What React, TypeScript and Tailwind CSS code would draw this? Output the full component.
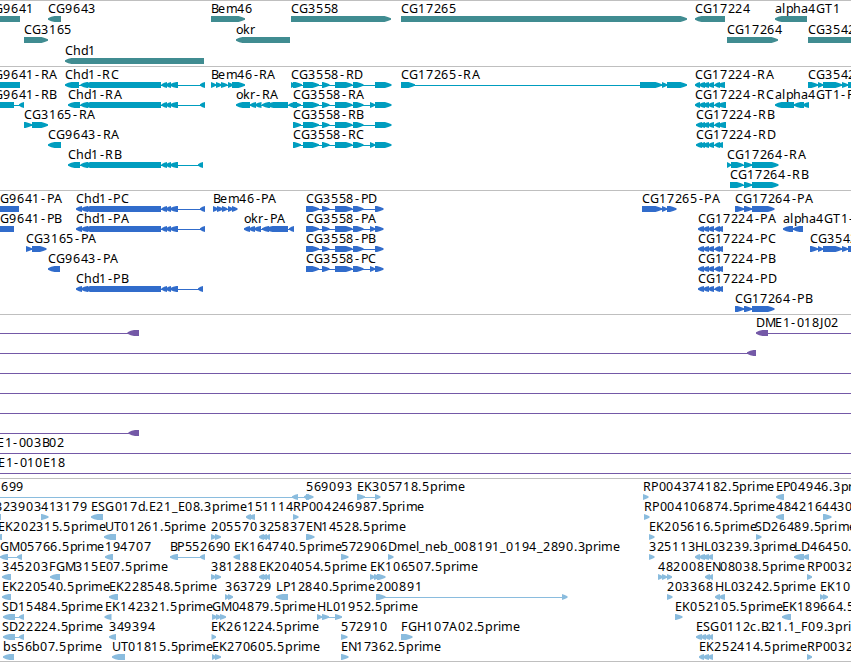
type Span = [number, number];
type Dir = 'l' | 'r' | '';

interface Feature {
  label: string;
  x: number;
  dir: Dir;
  spans: Span[];
}

interface Track {
  name: string;
  color: string;
  className: string;
  rowHeight: number;
  rows: Feature[][];
}

const WIDTH = 851;
const EM = 12;

// advance widths in em, used to place each glyph on a whole pixel
const ADVANCE: Record<string, number> = {
  A: 0.74, B: 0.62, C: 0.68, D: 0.76, E: 0.6, F: 0.575, G: 0.765, H: 0.75, J: 0.3, K: 0.656,
  L: 0.557, M: 0.863, P: 0.603, R: 0.69, S: 0.6, T: 0.611, U: 0.732,
  a: 0.613, b: 0.635, c: 0.55, d: 0.635, e: 0.6, g: 0.635, h: 0.634, i: 0.29, k: 0.579, l: 0.278,
  m: 0.974, n: 0.634, o: 0.612, p: 0.635, r: 0.42, s: 0.521,
  '-': 0.53, '.': 0.318, _: 0.5,
};
const DIGIT_ADVANCE = 0.643;

function glyphPositions(label: string, x: number) {
  let cur = x;
  return label.split('').map((ch) => {
    const at = Math.round(cur) + (ch === '-' ? 1 : 0);
    cur += (ADVANCE[ch] ?? DIGIT_ADVANCE) * EM;
    return at;
  }).join(' ');
}

const f = (label: string, x: number, dir: Dir, ...spans: Span[]): Feature => ({ label, x, dir, spans });

// exons shared by several transcripts
const chd1Tail: Span[] = [[161.5, 167], [166, 171], [170, 178]];
const cg3558: Span[] = [[322, 329.5], [335, 352.5], [353, 363.5]];
const cg17224: Span[] = [[703, 709], [708, 714], [714.5, 720]];
const cg17264: Span[] = [[744, 752], [752, 778.5]];
const cg3542: Span[] = [[818, 823], [823, 842], [842, 848], [848, 860]];

const tracks: Track[] = [
  {
    name: 'gene',
    color: '#408c91',
    className: 'h-[66px]',
    rowHeight: 21,
    rows: [
      [
        f('CG9641', -14, '', [-20, 20]),
        f('CG9643', 48, 'l', [48, 61]),
        f('Bem46', 211, 'r', [211, 245]),
        f('CG3558', 291, 'r', [291, 391]),
        f('CG17265', 401, 'r', [401, 687]),
        f('CG17224', 695, 'l', [695, 725]),
        f('alpha4GT1', 775, 'l', [775, 807]),
      ],
      [
        f('CG3165', 24, 'r', [24, 48]),
        f('okr', 236, 'l', [236, 290]),
        f('CG17264', 727, 'r', [727, 778]),
        f('CG3542', 808, '', [808, 860]),
      ],
      [f('Chd1', 65, 'l', [65, 204])],
    ],
  },
  {
    name: 'transcript',
    color: '#009dbf',
    className: 'h-[124px]',
    rowHeight: 20,
    rows: [
      [
        f('CG9641-RA', -14, '', [-20, 20]),
        f('Chd1-RC', 65, 'l', [65, 79], [80.5, 88], [84, 161], ...chd1Tail, [200, 205]),
        f('Bem46-RA', 211, 'r', [211, 216], [216, 221.5], [221, 227.5], [228, 233], [232, 245]),
        f('CG3558-RD', 291, 'r', [291, 295], [293, 302], [303, 319], ...cg3558, [375, 391.5]),
        f('CG17265-RA', 401, 'r', [401, 415], [640, 662], [662, 667], [667, 687]),
        f('CG17224-RA', 695, 'l', [695, 700], [699, 705], ...cg17224, [718, 725]),
        f('CG3542-RA', 808, 'r', [808, 818], ...cg3542),
      ],
      [
        f('CG9641-RB', -14, 'l', [-20, 14], [19, 24]),
        f('Chd1-RA', 68, 'l', [68, 80], [80.5, 88], [84, 161], ...chd1Tail, [200, 205]),
        f('okr-RA', 236, 'l', [236, 250], [250, 256], [255, 261.5], [262, 270], [267, 288], [288.5, 297]),
        f('CG3558-RA', 293, 'r', [293, 301], [303, 319], ...cg3558, [370, 375], [375, 391.5]),
        f('CG17224-RC', 695, 'l', [695, 700], [699, 705], ...cg17224, [718, 726]),
        f('alpha4GT1-RA', 775, 'l', [775, 794], [794, 804], [803, 809]),
      ],
      [
        f('CG3165-RA', 24, 'r', [24, 32], [32, 48]),
        f('CG3558-RB', 293, 'r', [293, 301], [303, 319], ...cg3558, [375, 391.5]),
        f('CG17224-RB', 696, 'l', [696, 702], [700, 705], ...cg17224, [718, 726]),
      ],
      [
        f('CG9643-RA', 48, 'l', [48, 61]),
        f('CG3558-RC', 293, 'r', [293, 301], [303, 319], ...cg3558, [370, 375], [375, 391.5]),
        f('CG17224-RD', 696, 'l', [696, 702], [700, 705], ...cg17224, [718, 723]),
      ],
      [
        f('Chd1-RB', 68, 'l', [68, 80], [80.5, 88], [84, 161], ...chd1Tail, [198, 203]),
        f('CG17264-RA', 727, 'r', [727, 731], [731, 743.5], ...cg17264),
      ],
      [f('CG17264-RB', 730, 'r', [730, 743.5], ...cg17264)],
    ],
  },
  {
    name: 'protein',
    color: '#316ccb',
    className: 'h-[124px]',
    rowHeight: 20,
    rows: [
      [
        f('CG9641-PA', -8, '', [-20, 19]),
        f('Chd1-PC', 76, 'l', [76, 82], [81, 88], [84, 161], ...chd1Tail, [200, 205]),
        f('Bem46-PA', 213, 'r', [213, 218], [217, 223], [222, 227.5], [228, 233], [232, 237.5]),
        f('CG3558-PD', 306, 'r', [306, 319], ...cg3558, [375, 383.5]),
        f('CG17265-PA', 642, 'r', [642, 662], [662, 667], [667, 676.5]),
        f('CG17264-PA', 735, 'r', [735, 744], [744, 752], [752, 774.5]),
      ],
      [
        f('CG9641-PB', -8, '', [-20, 14]),
        f('Chd1-PA', 76, 'l', [76, 82], [81, 88], [84, 161], ...chd1Tail, [200, 205]),
        f('okr-PA', 244, 'l', [244, 250], [249, 255], [254, 261], [262, 269], [266, 288], [289, 294]),
        f('CG3558-PA', 306, 'r', [306, 319], ...cg3558, [370, 375], [375, 383.5]),
        f('CG17224-PA', 698, 'l', [698, 704], ...cg17224, [718, 723]),
        f('alpha4GT1-PA', 783, 'l', [783, 793], [793, 803]),
      ],
      [
        f('CG3165-PA', 26, 'r', [26, 32], [32, 46.5]),
        f('CG3558-PB', 306, 'r', [306, 319], ...cg3558, [375, 383.5]),
        f('CG17224-PC', 698, 'l', [698, 704], ...cg17224, [718, 723]),
        f('CG3542-PA', 810, 'r', [810, 818], ...cg3542),
      ],
      [
        f('CG9643-PA', 48, 'l', [48, 60]),
        f('CG3558-PC', 306, 'r', [306, 319], ...cg3558, [370, 375], [375, 383.5]),
        f('CG17224-PB', 698, 'l', [698, 704], ...cg17224, [718, 723]),
      ],
      [
        f('Chd1-PB', 76, 'l', [76, 82], [81, 88], [84, 161], ...chd1Tail, [198, 203]),
        f('CG17224-PD', 698, 'l', [698, 704], ...cg17224, [718, 723]),
      ],
      [f('CG17264-PB', 735, 'r', [735, 744], [744, 752], [752, 774.5])],
    ],
  },
  {
    name: 'bac',
    color: '#7459a7',
    className: 'h-[164px]',
    rowHeight: 20,
    rows: [
      [
        f('', 0, 'l', [-20, -10], [127.5, 139]),
        f('DME1-018J02', 756, 'l', [756, 768], [860, 870]),
      ],
      [f('', 0, 'l', [-20, -10], [747, 756])],
      [f('', 0, 'l', [-20, -10], [860, 870])],
      [f('', 0, 'l', [-20, -10], [860, 870])],
      [f('', 0, 'l', [-20, -10], [860, 870])],
      [f('', 0, 'l', [-20, -10], [128.5, 139])],
      [f('DME1-003B02', -22, 'l', [-40, -30], [860, 870])],
      [f('DME1-010E18', -21, 'l', [-40, -30], [860, 870])],
    ],
  },
  {
    name: 'est',
    color: '#8abcde',
    className: 'h-[184px] border-b',
    rowHeight: 20,
    rows: [
      [
        f('699', 1, 'l', [-20, -10], [292, 298], [304, 309]),
        f('569093', 306, 'r', [306, 313.5]),
        f('EK305718.5prime', 357, 'r', [357, 365], [375, 380.5]),
        f('RP004374182.5prime', 643, 'r', [643, 648.5]),
        f('EP04946.3prime', 776, 'l', [776, 784]),
      ],
      [
        f('323903', -5, '', [-5, 1]),
        f('413179', 41, 'r', [41, 48.5]),
        f('ESG017d.E21_E08.3prime', 91, 'l', [91, 103]),
        f('151114', 247, 'l', [246, 251], [249, 255]),
        f('RP004246987.5prime', 293, 'r', [293, 298.5]),
        f('RP004106874.5prime', 644, 'r', [644, 649.5]),
        f('484216', 776, 'l', [776, 784]),
        f('443075', 822, 'r', [823, 831.5]),
      ],
      [
        f('EK202315.5prime', -2, 'l', [-5, 2]),
        f('UT01261.5prime', 105, 'l', [104, 116]),
        f('205570', 211, 'r', [211, 216], [215, 221]),
        f('325837', 259, 'l', [259, 264], [262, 267], [266, 270]),
        f('EN14528.5prime', 306, 'r', [306, 314.5]),
        f('EK205616.5prime', 649, 'r', [649, 654.5]),
        f('SD26489.5prime', 755, 'r', [756, 761.5]),
      ],
      [
        f('GM05766.5prime', 0, 'l', [0, 8], [17, 22]),
        f('194707', 105, 'l', [105, 113]),
        f('BP552690', 170, 'l', [170, 178], [200, 205]),
        f('EK164740.5prime', 234, 'l', [233.5, 240]),
        f('572906', 341, 'r', [341, 348.5]),
        f('Dmel_neb_008191_0194_2890.3prime', 388, 'r', [388, 393.5]),
        f('325113', 649, 'r', [649, 654.5]),
        f('HL03239.3prime', 695, 'l', [695, 700], [699, 705], [703, 709], [708, 713]),
        f('LD46450.5prime', 794, 'l', [794, 804], [803, 809]),
      ],
      [
        f('345203', 2, 'l', [2, 11]),
        f('FGM315E07.5prime', 49, 'l', [50, 60]),
        f('381288', 211, 'r', [211, 216], [215, 221]),
        f('EK204054.5prime', 259, 'l', [259, 264], [262, 267], [266, 270]),
        f('EK106507.5prime', 370, 'r', [370, 375], [374, 380], [377, 385.5]),
        f('482008', 658, 'r', [658, 663], [662, 667], [667, 672]),
        f('EN08038.5prime', 705, 'l', [705, 710], [709, 713]),
        f('RP003244', 807, 'r', [807, 812]),
      ],
      [
        f('EK220540.5prime', 2, 'l', [2, 11]),
        f('EK228548.5prime', 109, 'l', [109, 118]),
        f('363729', 225, 'r', [225, 229], [228, 233]),
        f('LP12840.5prime', 276, 'l', [276, 288]),
        f('200891', 376, 'r', [376, 385.5], [562, 567.5]),
        f('203368', 667, 'r', [667, 672.5]),
        f('HL03242.5prime', 715, 'l', [715, 720], [719, 725]),
        f('EK1032', 820, 'r', [820, 824], [823, 828]),
      ],
      [
        f('SD15484.5prime', 2, 'l', [3, 15], [19, 24]),
        f('EK142321.5prime', 105, 'l', [104.5, 111.5]),
        f('GM04879.5prime', 212, 'r', [212, 217], [216, 221], [220, 226]),
        f('HL01952.5prime', 317, 'r', [317, 322], [322, 329], [335, 342]),
        f('EK052105.5prime', 675, 'r', [675, 682.5]),
        f('EK189664.5prime', 782, 'l', [782, 791]),
      ],
      [
        f('SD22224.5prime', 2, 'l', [3, 15], [19, 24]),
        f('349394', 109, 'l', [109, 116]),
        f('EK261224.5prime', 211, 'r', [211.5, 216]),
        f('572910', 341, 'r', [341, 347.5]),
        f('FGH107A02.5prime', 401, 'r', [401, 412.5]),
        f('ESG0112c.B21.1_F09.3prime', 696, 'l', [696, 702], [701, 706], [705, 710], [709, 713]),
      ],
      [
        f('bs56b07.5prime', 3, 'l', [3, 14]),
        f('UT01815.5prime', 112, 'l', [112, 125]),
        f('EK270605.5prime', 212, 'r', [212, 216], [215, 221]),
        f('EN17362.5prime', 341, 'r', [341, 348.5]),
        f('EK252414.5prime', 699, 'l', [699, 704], [703, 709], [708, 713]),
        f('RP003244', 807, 'r', [807, 812]),
      ],
    ],
  },
];

function exonPoints([a, b]: Span, dir: Dir) {
  const head = Math.min(6.5, b - a);
  const mid = head * 0.5;
  if (dir === 'r') {
    return `${a},12 ${b - head},12 ${b - mid},13 ${b},14.2 ${b},15.8 ${b - mid},17 ${b - head},18 ${a},18`;
  }
  if (dir === 'l') {
    return `${b},12 ${a + head},12 ${a + mid},12.7 ${a},14.2 ${a},15.8 ${a + mid},17.3 ${a + head},18 ${b},18`;
  }
  return `${a},12 ${b},12 ${b},18 ${a},18`;
}

function Glyph({ feature }: { feature: Feature }) {
  const { spans, dir } = feature;
  const start = spans[0][0];
  const end = spans[spans.length - 1][1];
  return (
    <g>
      {spans.length > 1 && (
        <rect x={start + 1} y={15} width={end - start - 2} height={1} shapeRendering="crispEdges" />
      )}
      {spans.map((s, i) => (
        <polygon key={i} points={exonPoints(s, dir)} />
      ))}
    </g>
  );
}

function Row({ features, color, height }: { features: Feature[]; color: string; height: number }) {
  return (
    <svg className="block shrink-0 overflow-visible" width={WIDTH} height={height} fill={color}>
      {features.map((ft, i) => (
        <Glyph key={i} feature={ft} />
      ))}
      {features.filter((ft) => ft.label).map((ft) => (
        <text key={ft.label} x={glyphPositions(ft.label, ft.x)} y={9} fill="#000">
          {ft.label}
        </text>
      ))}
    </svg>
  );
}

export default function App() {
  return (
    <div className="flex h-[662px] w-[851px] flex-col overflow-hidden bg-white font-['Noto_Sans',sans-serif] text-[12.5px]">
      {tracks.map((t) => (
        <section key={t.name} className={`flex shrink-0 flex-col border-t border-[#bfbfbf] pt-[3px] ${t.className}`}>
          {t.rows.map((row, i) => (
            <Row key={i} features={row} color={t.color} height={t.rowHeight} />
          ))}
        </section>
      ))}
    </div>
  );
}
